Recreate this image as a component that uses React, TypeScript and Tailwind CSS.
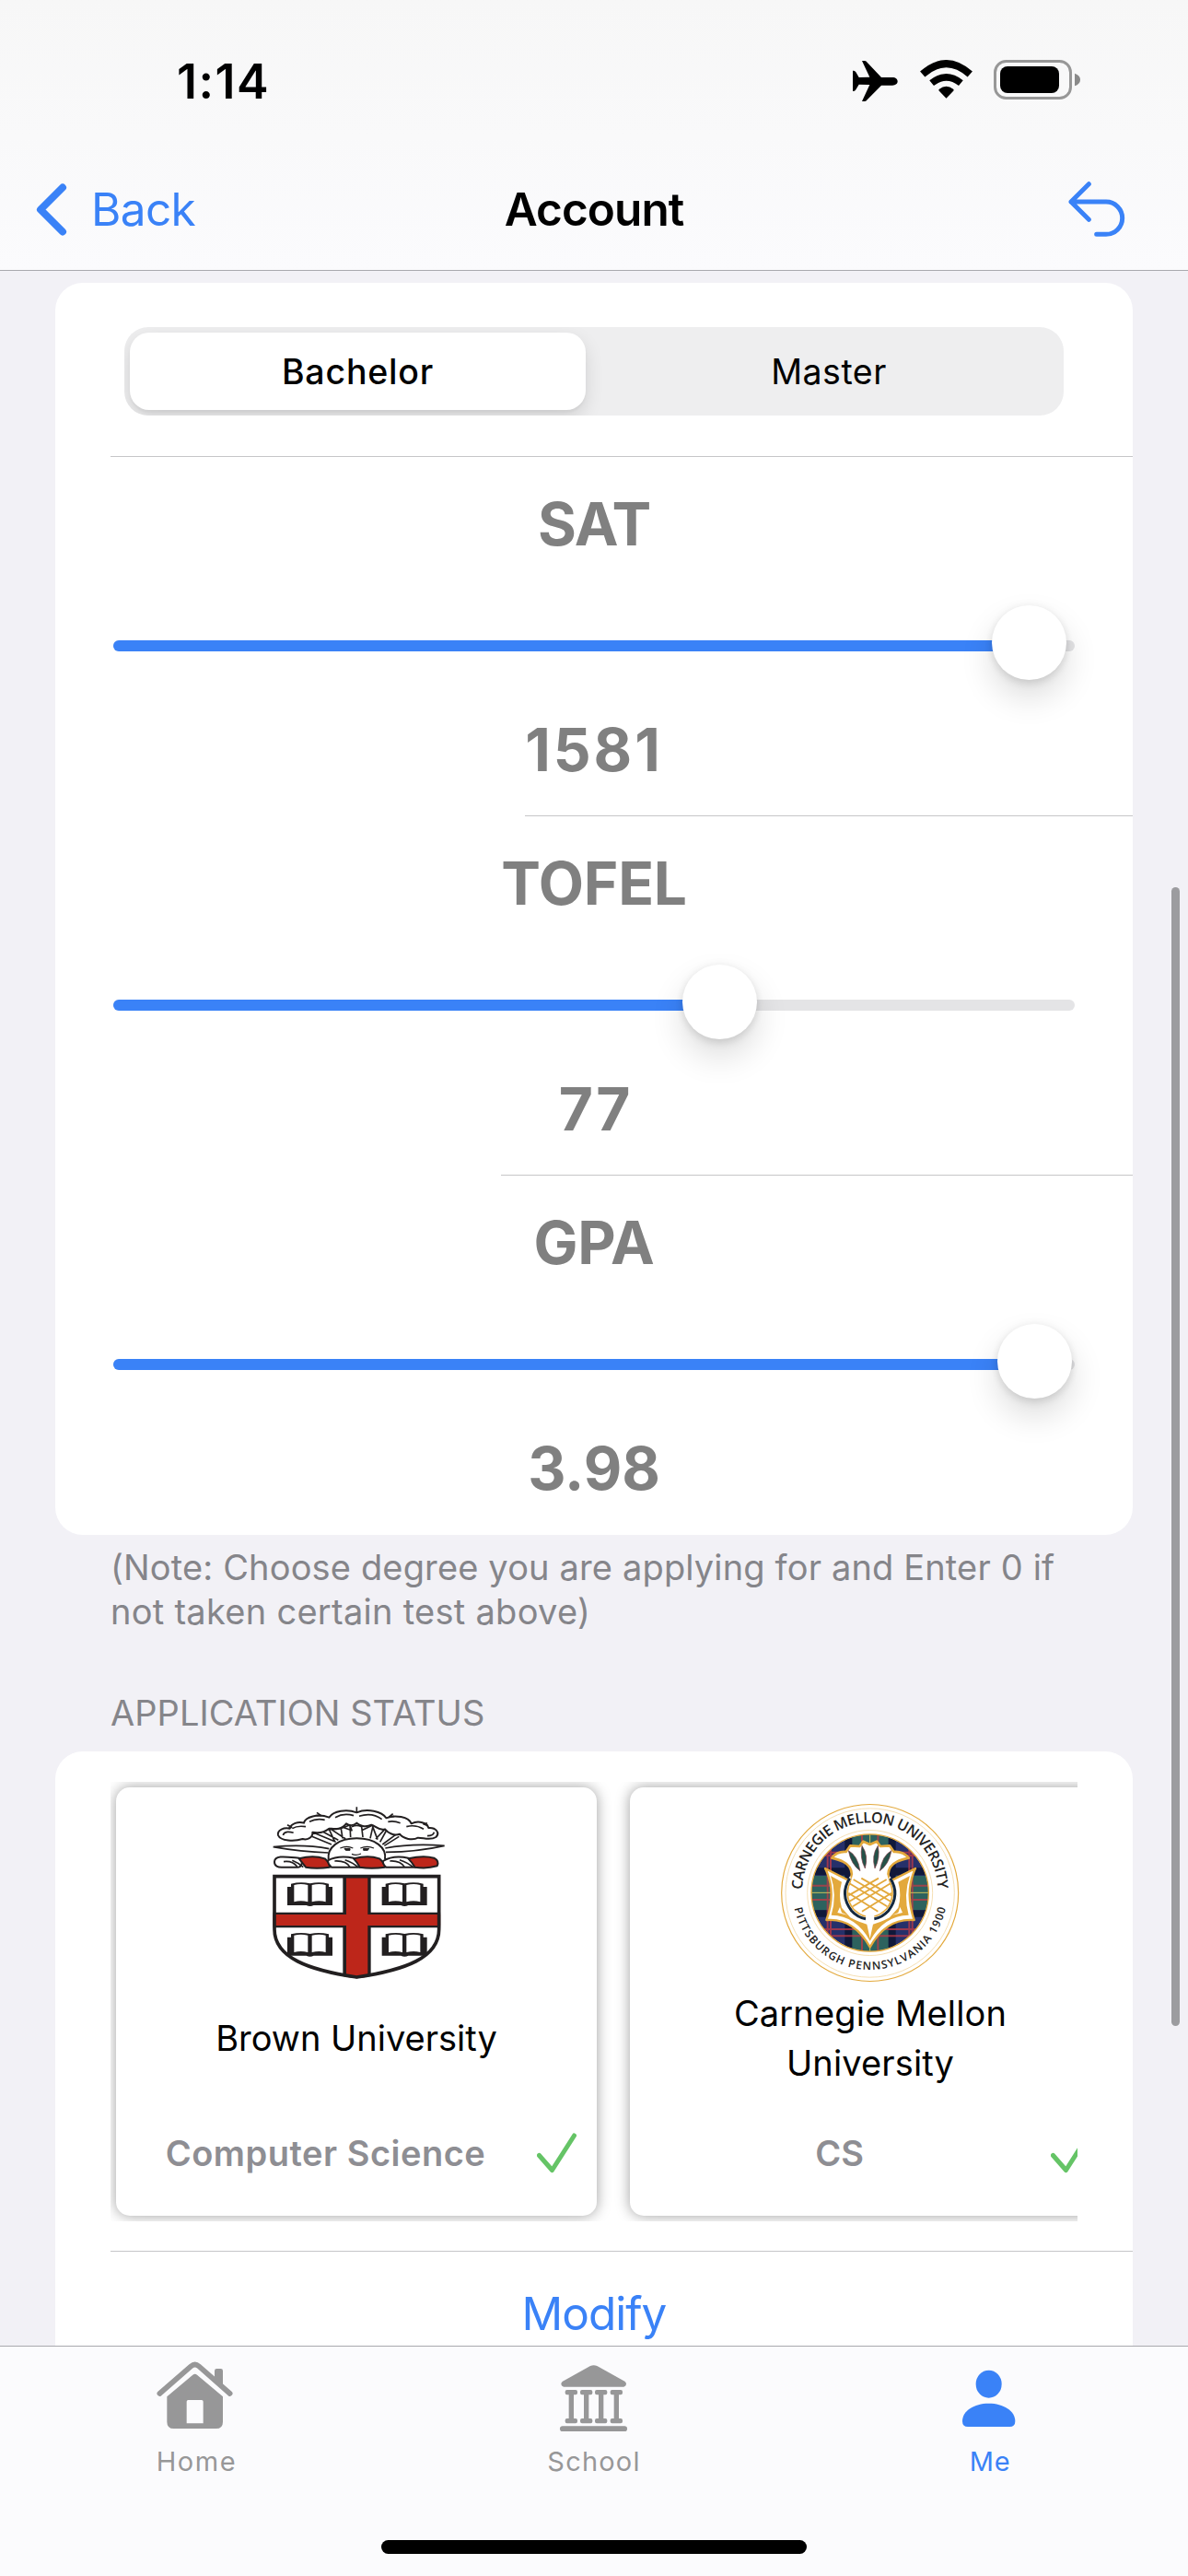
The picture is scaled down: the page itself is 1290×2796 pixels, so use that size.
import type { ReactNode } from "react";

function StatusBar() {
  return (
    <div className="flex h-[174px] items-center justify-between pr-[117px] pl-[192px]">
      <span className="mt-[3px] text-[52px] leading-none font-semibold tracking-[1.5px] text-black">1:14</span>
      <div className="flex items-center">
        <svg className="mr-6 mt-px h-11 w-[49px]" viewBox="78 78 147 132">
          <path
            d="M108 78h9q5 0 8 5l46 49h36c11 0 17 6 17 13s-6 13-17 13h-36l-46 47q-3 5-8 5h-9l25-54-35-1-10 17q-3 5-7 5h-3v-67h3q4 0 7 5l10 17 35-1z"
            fill="#000"
          />
        </svg>
        <svg className="mr-[23px] -mt-0.5 h-[42px] w-[57px]" viewBox="296 75 172 127">
          <path d="M382 201l-24-25q-2-3 1-5 23-18 46 0 3 2 1 5z" />
          <path d="M334 151q48-38 96 0" fill="none" stroke="#000" strokeWidth="23" />
          <path d="M304 122q78-69 156 0" fill="none" stroke="#000" strokeWidth="24" />
        </svg>
        <svg className="-mt-0.5 h-[43px] w-[94px]" viewBox="537 75 282 129">
          <rect x="541.5" y="79.5" width="246" height="120" rx="36" fill="none" stroke="#979797" strokeWidth="9" />
          <rect x="558" y="96" width="192" height="87" rx="24" />
          <path d="M801 119q18 6 18 20.500t-18 20.500z" fill="#8a8a8a" />
        </svg>
      </div>
    </div>
  );
}

function NavBar() {
  return (
    <div className="mb-[13px] grid h-[106px] grid-cols-3 items-center">
      <div className="flex items-center pl-[39px] text-[#3a82f7]">
        <svg className="h-[57px] w-[34px]" viewBox="0 0 34 57" fill="none" stroke="currentColor" strokeWidth="8" strokeLinecap="round" strokeLinejoin="round">
          <path d="M29 4.500 5 28.500l24 24" />
        </svg>
        <span className="mt-0.5 ml-[26px] text-[49.5px] leading-none tracking-[-0.65px]">Back</span>
      </div>
      <h1 className="mt-0.5 text-center text-[49.5px] leading-none font-semibold tracking-[-0.94px] text-black">Account</h1>
      <div className="flex justify-end pr-[68px]">
        <svg className="h-[60px] w-[62px]" viewBox="88 52 186 180" fill="none" stroke="#3a82f7" strokeWidth="15" strokeLinecap="round" strokeLinejoin="round">
          <path d="M155 60 97 118l58 58M97 118h114a53 53 0 0 1 0 106h-31" />
        </svg>
      </div>
    </div>
  );
}

function SegmentedControl() {
  return (
    <div className="mx-[75px] mt-12 grid h-24 grid-cols-2 overflow-hidden rounded-[26px] bg-[#eeeeef] text-[37.5px] leading-none text-black">
      <div className="my-1.5 mr-[9px] ml-1.5 flex items-center justify-center rounded-[21px] bg-white pt-0.5 font-medium tracking-[0.8px] shadow-[0_8px_20px_rgba(0,0,0,0.12),0_3px_3px_rgba(0,0,0,0.04)]">
        Bachelor
      </div>
      <div className="flex items-center justify-center pt-0.5 tracking-[0.5px]">Master</div>
    </div>
  );
}

type ScoreRowProps = { label: string; value: string; fill: number; labelClass: string; valueClass: string; divider?: string };

function ScoreRow({ label, value, fill, labelClass, valueClass, divider }: ScoreRowProps) {
  return (
    <div className="flex h-[390px] flex-col text-center text-[64px] leading-[81px] font-bold text-[#808080]">
      <div className={`mt-8 ${labelClass}`}>{label}</div>
      <div className="relative mx-[63px] mt-12 flex h-[82px] items-center">
        <div className="mt-[5px] h-3 w-full overflow-hidden rounded-full bg-[#e4e4e6]">
          <div className="h-full bg-[#3a82f7]" style={{ width: fill }} />
        </div>
        <div
          className="absolute top-0 -ml-[41px] size-[81px] rounded-full bg-white shadow-[0_18px_36px_rgba(0,0,0,0.14),0_0_10px_rgba(0,0,0,0.06),0_5px_8px_rgba(0,0,0,0.08)]"
          style={{ left: fill }}
        />
      </div>
      <div className={`mt-[34px] ${valueClass}`}>{value}</div>
      {divider && <div className={`mt-auto h-px bg-[#c6c6c8] ${divider}`} />}
    </div>
  );
}

const BOOKS: [number, number][] = [[96, 310], [404, 310], [96, 474], [404, 474]];

function BrownCrest() {
  return (
    <svg className="h-[220px] w-[214px]" viewBox="0 0 642 660" fill="none" stroke="#221f20" strokeWidth="6" strokeLinejoin="round">
      <clipPath id="shield">
        <path d="M49 286H595V462C595 560 480 600 322 622C165 600 49 560 49 462Z" />
      </clipPath>
      {/* rays */}
      <path d="M50 194Q150 184 232 200M50 194Q140 210 230 213M608 190Q500 182 415 198M608 190Q520 210 417 211" strokeWidth="5" />
      <path d="M176 160 240 186M182 148 254 178M204 140 262 172M232 136 250 176M238 136 286 168M270 128 276 166M300 122 302 162M306 128Q322 120 338 128L342 162M376 122 366 166M374 128 390 170M414 136 384 168M420 138 398 178M452 152 406 186M460 160 412 190M176 150Q200 152 232 136Q262 140 300 122L306 140L276 130M338 140L376 122Q400 142 424 136Q440 152 462 154" strokeWidth="5" />
      {/* sun */}
      <path d="M230 234C226 196 262 166 322 166S420 196 414 234" fill="#fff" />
      <path d="M268 198Q290 188 310 198M334 198Q356 188 378 198" strokeWidth="4" />
      <path d="M282 199h18v6h-14zM344 199h18l-4 6h-14z" fill="#221f20" strokeWidth="3" />
      <path d="M306 217Q320 224 336 216" strokeWidth="4" />
      {/* cloud */}
      <path
        d="M66 156C62 138 86 130 104 134C108 118 132 110 150 116C154 96 196 84 232 98C246 76 290 70 322 82C356 68 404 78 418 100C446 88 492 96 500 118C524 106 552 116 556 132C580 130 594 148 580 162C562 174 540 164 522 164C504 174 474 168 462 152C444 160 424 148 414 136C394 142 384 126 370 122C350 132 330 124 322 116C310 126 296 124 288 118C270 142 244 134 232 134C210 152 190 148 178 146C180 164 160 172 146 168C120 176 74 176 66 156Z"
        fill="#fff"
      />
      <path d="M82 156C86 142 104 144 116 148M112 134Q128 124 156 128M168 112Q190 100 218 106M252 98Q280 82 312 92M330 94Q372 80 404 104M424 112Q444 108 464 116M484 128Q514 120 540 136M574 146Q572 158 552 158" strokeWidth="5" />
      <path d="M322 64V82M192 82 206 92 190 92M96 122 110 130 100 132M440 86 428 96 444 94M552 116 540 120 554 124" strokeWidth="5" />
      {/* torse */}
      <g strokeWidth="6">
        <path d="M54 243C54 220 90 226 134 230C150 240 144 262 126 260H84C64 262 54 256 54 243Z" fill="#fff" />
        <path d="M84 242Q112 238 128 258M112 238Q132 246 148 260" strokeWidth="5" />
        <path d="M134 232Q180 220 218 232Q234 246 234 260Q190 266 156 260Q144 244 134 232Z" fill="#bd261a" />
        <path d="M228 238Q262 220 312 230Q328 246 334 260H240Q228 250 228 238Z" fill="#fff" />
        <path d="M250 240Q288 238 300 260M284 236Q312 246 326 260" strokeWidth="5" />
        <path d="M312 232Q360 220 396 232Q412 246 414 260Q370 266 332 260Q324 244 312 232Z" fill="#bd261a" />
        <path d="M408 240Q440 220 490 230Q506 246 514 260H418Q406 250 408 240Z" fill="#fff" />
        <path d="M430 240Q464 238 478 260M462 236Q490 246 506 260" strokeWidth="5" />
        <path d="M490 232Q540 220 574 230Q592 240 584 256Q550 266 512 260Q502 244 490 232Z" fill="#bd261a" />
      </g>
      {/* shield */}
      <g clipPath="url(#shield)" stroke="none">
        <path d="M49 286H595V640H49Z" fill="#fff" />
        {BOOKS.map(([x, y]) => (
          <g key={`${x}-${y}`} transform={`translate(${x} ${y})`}>
            <path d="M0 14H12V4Q44-4 74 3Q104-4 135 4V14H147V74H86Q74 80 62 74H0Z" fill="#221f20" />
            <path d="M22 8Q44 2 67 8V63Q44 57 22 63ZM80 8Q104 2 125 8V63Q104 57 80 63Z" fill="#fff" />
          </g>
        ))}
        <path d="M277 286H368V640H277ZM49 407H595V457H49Z" fill="#221f20" />
        <path d="M288 292H358V640H288ZM49 414H595V450H49Z" fill="#bd261a" />
      </g>
      <path d="M54 290H590V462C590 555 480 595 322 618C165 595 54 555 54 462Z" strokeWidth="11" strokeLinejoin="miter" />
    </svg>
  );
}

function CarnegieSeal() {
  return (
    <svg className="h-[220px] w-[230px]" viewBox="0 0 690 660" fill="none">
      <clipPath id="field">
        <circle cx="344" cy="343.500" r="190" />
      </clipPath>
      <circle cx="344" cy="343.500" r="288" fill="#fff" stroke="#e3a93c" strokeWidth="3.500" />
      <circle cx="344" cy="343.500" r="275" stroke="#f3d9a4" strokeWidth="2.500" />
      <circle cx="344" cy="343.500" r="204" stroke="#f3d9a4" strokeWidth="2.500" />
      <g clipPath="url(#field)">
        <path d="M150 150H540V540H150Z" fill="#26306a" />
        <path d="M285 150H405V540H285ZM150 288H540V400H150Z" fill="#2f6b5c" fillOpacity="0.85" />
        <path d="M262 150H286V540H262ZM404 150H428V540H404ZM150 262H540V286H150ZM150 400H540V422H150Z" fill="#10183a" />
        <path d="M206 150V540M216 150V540M318 150V540M370 150V540M472 150V540M482 150V540M150 212H540M150 222H540M150 320H540M150 366H540M150 462H540M150 484H540" stroke="#c23a46" strokeWidth="6" strokeOpacity="0.75" />
        <path d="M344 150V540M150 343H540" stroke="#c9c35a" strokeWidth="3" />
      </g>
      <circle cx="344" cy="343.500" r="191" stroke="#e3a93c" strokeWidth="4" />
      {/* leaves */}
      <path
        d="M198 264L276 304Q236 366 290 412Q312 432 344 434Q376 432 398 412Q452 366 412 304L492 264Q456 340 488 432Q398 424 344 520Q290 424 202 432Q236 340 198 264Z"
        fill="#fff"
        stroke="#e3a93c"
        strokeWidth="7"
        strokeLinejoin="round"
      />
      <path d="M216 288L252 308Q240 350 252 392L280 424Q310 440 334 446L344 492L354 446Q378 440 408 424L436 392Q448 350 436 308L474 288Q452 350 470 416Q388 418 344 500Q300 418 218 416Q238 350 216 288Z" fill="#e3a93c" />
      <path d="M246 390L252 408L272 416L238 408ZM442 390L436 408L416 416L450 408Z" fill="#fff" />
      {/* bulb */}
      <circle cx="344" cy="350" r="89" fill="#fff" />
      <path d="M278 296Q244 350 284 402Q304 424 330 428M410 296Q444 350 404 402Q384 424 358 428" stroke="#14293f" strokeWidth="9" />
      <path d="M286 296Q254 350 290 396Q310 416 330 420M402 296Q434 350 398 396Q378 416 358 420" stroke="#e3a93c" strokeWidth="5" />
      {/* flower */}
      <path
        d="M220 230Q236 208 266 210L280 190L310 192L322 176L344 186L366 176L378 192L408 190L422 210Q452 208 470 230Q444 236 432 242Q400 258 404 292Q344 312 284 292Q288 258 256 242Q244 236 220 230Z"
        fill="#fff"
        stroke="#e3a93c"
        strokeWidth="8"
        strokeLinejoin="round"
      />
      <path d="M288 284Q344 300 400 284L412 330Q412 400 344 412Q276 400 276 330Z" fill="#fff" />
      <path d="M276 312L400 388M290 300L412 372M316 296L414 352M274 344L370 404M412 312L288 388M398 300L276 372M372 296L274 352M414 344L318 404" stroke="#e3a93c" strokeWidth="5.500" />
      <path d="M274 206Q304 222 312 272Q282 250 274 206ZM318 190Q340 222 328 264Q310 230 318 190ZM370 190Q348 222 360 264Q378 230 370 190ZM414 206Q384 222 376 272Q406 250 414 206Z" fill="#245148" stroke="#7c3a45" strokeWidth="2" />
      <path d="M338 420H350V452L344 476L338 452Z" fill="#fff" />
      <path id="seal-top" d="M123.500 335A220.500 220.500 0 0 1 564.500 335" />
      <path id="seal-bottom" d="M97 392A252 252 0 0 0 591 392" />
      <text fill="#222" className="font-['Open_Sans'] text-[48px] font-semibold">
        <textPath href="#seal-top" textLength="686" startOffset="2">CARNEGIE MELLON UNIVERSITY</textPath>
      </text>
      <text fill="#222" className="font-['Open_Sans'] text-[36px] font-semibold">
        <textPath href="#seal-bottom" textLength="688" startOffset="2">PITTSBURGH PENNSYLVANIA 1900</textPath>
      </text>
    </svg>
  );
}

function SchoolTile({ crest, name, major }: { crest: ReactNode; name: ReactNode; major: ReactNode }) {
  return (
    <div className="flex h-[465px] w-[522px] shrink-0 flex-col items-center rounded-[15px] bg-white shadow-[0_0_15px_rgba(0,0,0,0.38)]">
      {crest}
      <div className="-mt-0.5 flex h-[108px] items-center text-center text-[38px] leading-[54px] text-black">{name}</div>
      <div className="mt-[21px] flex h-[100px] w-full items-center pr-[22px]">
        <div className="flex-1 pr-0.5 text-center text-[38px] leading-none font-semibold text-[#8e8e93]">{major}</div>
        <svg className="h-11 w-[43px]" viewBox="0 0 43 44" fill="none" stroke="#65c466" strokeWidth="5" strokeLinecap="round" strokeLinejoin="round">
          <path d="M2.500 24.500 16.500 40.500 40.500 3" />
        </svg>
      </div>
    </div>
  );
}

function HomeIcon() {
  return (
    <>
      <path d="M73 144 175 55q13-11 26 0l101 89" fill="none" stroke="currentColor" strokeWidth="17" strokeLinecap="round" />
      <path d="M252 100V70q0-7 7-7h13q7 0 7 7v56z" />
      <path fillRule="evenodd" d="M97 154 181 83q7-5 14 0l84 71v82q0 22-22 22H119q-22 0-22-22zM166 165q-5 0-5 5v71h54v-71q0-5-5-5z" />
    </>
  );
}

function SchoolIcon() {
  return (
    <>
      <path d="M183 54q11-5 22 0l90 50q5 3 5 9t-8 9H96q-8-3-8-9t5-9z" />
      {[101, 150, 198, 248].map((x) => (
        <path key={x} d={`M${x + 6} 132h28q6 0 6 6v4q0 6-6 6h-6v77h6q6 0 6 6v4q0 6-6 6h-28q-6 0-6-6v-4q0-6 6-6h6v-77h-6q-6 0-6-6v-4q0-6 6-6z`} />
      ))}
      <rect x="84" y="250" width="219" height="17" rx="8.500" />
    </>
  );
}

function PersonIcon() {
  return (
    <>
      <ellipse cx="191" cy="113" rx="42" ry="45" />
      <path d="M105 234c0-34 38-58 86-58s86 24 86 58q0 18-18 18H123q-18 0-18-18z" />
    </>
  );
}

function Tab({ label, className, children }: { label: string; className: string; children: ReactNode }) {
  return (
    <div className={`flex w-[430px] flex-col items-center ${className}`}>
      <svg className="h-20 w-[110px]" viewBox="30 30 330 240" fill="currentColor">
        {children}
      </svg>
      <span className="mt-3 text-[29px] leading-10">{label}</span>
    </div>
  );
}

export default function App() {
  return (
    <div className="flex h-[2796px] w-[1290px] flex-col overflow-hidden bg-[#f2f1f6] font-['Inter',sans-serif]">
      <header className="h-[294px] shrink-0 border-b border-[#a9a9ae] bg-linear-to-b from-[#f7f7f7] to-[#fbfbfd]">
        <StatusBar />
        <NavBar />
      </header>

      <main className="relative h-[2252px] shrink-0 overflow-hidden px-[60px] pt-[13px]">
        <section className="rounded-[30px] bg-white">
          <div className="flex h-[189px] flex-col">
            <SegmentedControl />
            <div className="mt-auto ml-[60px] h-px bg-[#c6c6c8]" />
          </div>
          <ScoreRow label="SAT" value="1581" fill={994.5} labelClass="tracking-[-1.2px]" valueClass="tracking-[2.9px]" divider="ml-[510px]" />
          <ScoreRow label="TOFEL" value="77" fill={658.5} labelClass="tracking-[-0.2px]" valueClass="pl-[3px] tracking-[2px]" divider="ml-[484px]" />
          <ScoreRow label="GPA" value="3.98" fill={1000.5} labelClass="tracking-[-0.3px]" valueClass="tracking-normal" />
        </section>

        <p className="mt-[11px] ml-[60px] text-[38px] leading-[48px] text-[#85858a]">
          <span className="tracking-[0.15px]">(Note: Choose degree you are applying for and Enter 0 if</span>
          <br />
          <span className="tracking-[0.28px]">not taken certain test above)</span>
        </p>

        <h2 className="mt-[62px] ml-[60px] text-[38px] leading-[48px] tracking-[0.05px] text-[#85858a]">APPLICATION STATUS</h2>

        <section className="mt-[18px] h-[800px] rounded-[30px] bg-white pt-[33px]">
          <div className="mx-[60px] flex h-[477px] gap-9 overflow-hidden p-1.5">
            <SchoolTile crest={<BrownCrest />} name="Brown University" major={<span className="tracking-[0.5px]">Computer Science</span>} />
            <SchoolTile
              crest={<CarnegieSeal />}
              name={
                <span className="tracking-[0.13px]">
                  Carnegie Mellon
                  <br />
                  University
                </span>
              }
              major="CS"
            />
          </div>
          <div className="mt-8 ml-[60px] h-px bg-[#c6c6c8]" />
          <div className="text-center text-[49.5px] leading-[134px] tracking-[-1px] text-[#3a82f7]">Modify</div>
        </section>

        <div className="absolute top-[669px] right-[9px] h-[1236px] w-[9px] rounded-full bg-[#9c9c9f]" />
      </main>

      <footer className="flex h-[250px] shrink-0 flex-col items-center border-t border-[#a9a9ae] bg-[#fbfbfd] pt-[13px]">
        <nav className="flex">
          <Tab label="Home" className="pr-[3px] tracking-[1.6px] text-[#979798]">
            <HomeIcon />
          </Tab>
          <Tab label="School" className="tracking-[1.2px] text-[#979798]">
            <SchoolIcon />
          </Tab>
          <Tab label="Me" className="tracking-[0.8px] text-[#3a82f7]">
            <PersonIcon />
          </Tab>
        </nav>
        <div className="mt-[65px] h-[15px] w-[462px] rounded-full bg-black" />
      </footer>
    </div>
  );
}
